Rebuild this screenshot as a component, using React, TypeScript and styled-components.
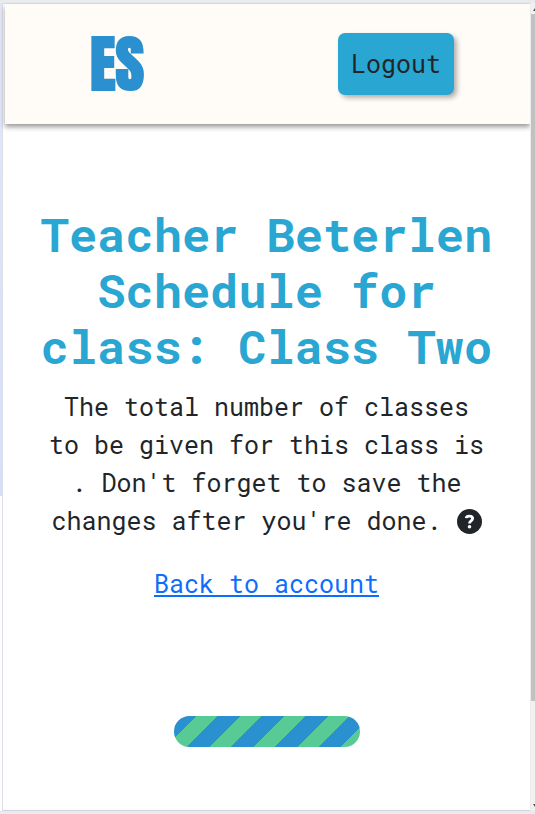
import React from "react";
import styled, { createGlobalStyle } from "styled-components";

const GlobalStyle = createGlobalStyle`
  *, *::before, *::after { box-sizing: border-box; }
  body {
    margin: 0;
    background: #ffffff;
    color: #212529;
    font-family: "Roboto Mono", "DejaVu Sans Mono", monospace;
    font-size: 25px;
    line-height: 38px;
  }
`;

const Frame = styled.div`
  display: grid;
  grid-template-columns: 3px minmax(0, 1fr) 5px;
  grid-template-rows: 3px minmax(0, 1fr) 3px;
  min-height: 100vh;
  background: #e9ebee;
`;

const LeftEdge = styled.div`
  grid-row: 2;
  grid-column: 1;
  border-right: 1px solid #dcdfe6;
  background: linear-gradient(#e6e6fa 0, #d5defb 61%, #ffffff 61%);
`;

const Page = styled.div`
  grid-row: 2;
  grid-column: 2;
  background: #ffffff;
  border-top: 1px solid #dcdcea;
  border-bottom: 1px solid #d0d3dc;
`;

const ScrollTrack = styled.div`
  grid-row: 2;
  grid-column: 3;
  display: flex;
  flex-direction: column;
  align-items: flex-end;
  border-left: 1px solid #ececec;
  background: #f1f1f1;
`;

const ScrollThumb = styled.div`
  flex: 0 0 85%;
  width: 100%;
  background: #c1c1c1;
`;

const ScrollArrow = styled.svg`
  display: block;
  width: 4px;
  height: 11px;
  fill: #505050;
`;

const ScrollGap = styled.div`
  flex: 1;
`;

const Header = styled.header`
  display: flex;
  align-items: center;
  justify-content: space-around;
  height: 120px;
  margin-left: 2px;
  background: #fffcf8;
  box-shadow: 0 3px 5px rgba(0, 0, 0, 0.4);
`;

const Logo = styled.a`
  width: 105px;
  padding-left: 9px;
  color: #2a90cf;
  font-family: Impact, Anton, "Liberation Sans Narrow", "Liberation Sans", sans-serif;
  font-size: 62px;
  font-weight: 900;
  line-height: 64px;
  text-decoration: none;
`;

const LogoutButton = styled.button`
  padding: 12px 13px;
  border: 0;
  border-radius: 7px;
  background: #29a6d1;
  box-shadow: 3px 3px 5px rgba(0, 0, 0, 0.3);
  color: #212529;
  font: inherit;
  cursor: pointer;
`;

const Main = styled.main`
  display: flex;
  flex-direction: column;
  align-items: center;
  padding: 82px 32px 62px;
  text-align: center;
`;

const Title = styled.h1`
  margin: 0 0 14px;
  color: #29a6d1;
  font-size: 47px;
  font-weight: 700;
  line-height: 56px;
`;

const Note = styled.p`
  margin: 0 0 25px;
  padding: 0 12px;
`;

const HelpIcon = styled.svg`
  width: 25px;
  height: 25px;
  vertical-align: -4px;
`;

const BackLink = styled.a`
  color: #0d6efd;
  text-decoration: underline;
`;

const Loader = styled.div`
  width: 186px;
  height: 31px;
  margin-top: 113px;
  border-radius: 16px;
  background: repeating-linear-gradient(135deg, #2a90cf 0 16px, #58ca95 16px 31px);
`;

export default function App() {
  return (
    <>
      <GlobalStyle />
      <Frame>
        <LeftEdge />
        <Page>
          <Header>
            <Logo href="#">ES</Logo>
            <LogoutButton type="button">Logout</LogoutButton>
          </Header>
          <Main>
            <Title>Teacher Beterlen Schedule for class: Class Two</Title>
            <Note>
              The total number of classes to be given for this class is . Don't forget to save the
              changes after you're done.{" "}
              <HelpIcon viewBox="0 0 16 16" role="img" aria-label="Help">
                <circle cx="8" cy="8" r="8" fill="#212529" />
                <path
                  d="M5.9 5.9C6 4.9 6.8 4.5 7.9 4.5c1.3 0 2.1.6 2.1 1.6 0 1.6-2 1.5-2 3.2"
                  fill="none"
                  stroke="#ffffff"
                  strokeWidth="1.8"
                />
                <circle cx="8" cy="11.4" r="1.15" fill="#ffffff" />
              </HelpIcon>
            </Note>
            <BackLink href="#">Back to account</BackLink>
            <Loader role="progressbar" aria-label="Loading" />
          </Main>
        </Page>
        <ScrollTrack aria-hidden="true">
          <ScrollArrow viewBox="0 0 4 11">
            <path d="M4 5v3H2z" />
          </ScrollArrow>
          <ScrollThumb />
          <ScrollGap />
          <ScrollArrow viewBox="0 0 4 11">
            <path d="M2 4h2v3z" />
          </ScrollArrow>
        </ScrollTrack>
      </Frame>
    </>
  );
}
